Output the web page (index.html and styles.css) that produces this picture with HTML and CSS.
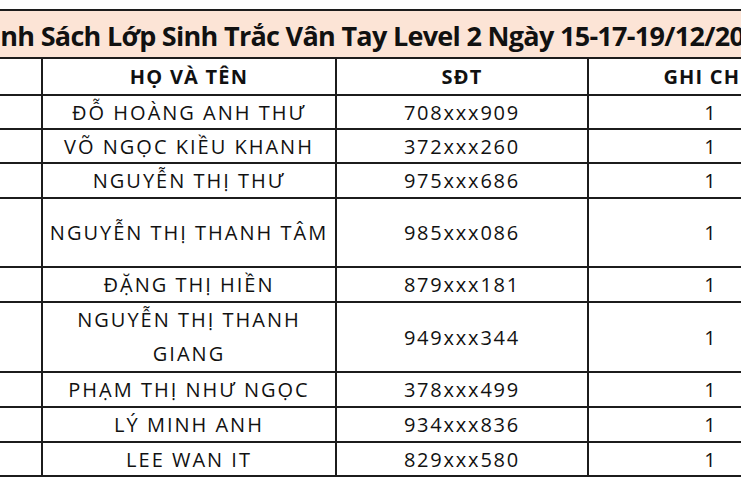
FILE: index.html
```html
<!DOCTYPE html>
<html lang="vi">
<head>
<meta charset="utf-8">
<title>Danh Sách Lớp Sinh Trắc Vân Tay Level 2</title>
<link rel="stylesheet" href="styles.css">
</head>
<body>
<div class="sheet">
  <table class="roster">
    <colgroup>
      <col class="c-stt">
      <col class="c-name">
      <col class="c-phone">
      <col class="c-note">
    </colgroup>
    <tr class="r-title">
      <td colspan="4" class="title">Danh Sách Lớp Sinh Trắc Vân Tay Level 2 Ngày 15-17-19/12/2023</td>
    </tr>
    <tr class="r-head">
      <th class="stt">STT</th>
      <th>HỌ VÀ TÊN</th>
      <th>SĐT</th>
      <th>GHI CHÚ</th>
    </tr>
    <tr class="r-34"><td class="stt">1</td><td class="name">ĐỖ HOÀNG ANH THƯ</td><td class="phone">708xxx909</td><td class="note">1</td></tr>
    <tr class="r-34"><td class="stt">2</td><td class="name">VÕ NGỌC KIỀU KHANH</td><td class="phone">372xxx260</td><td class="note">1</td></tr>
    <tr class="r-35"><td class="stt">3</td><td class="name">NGUYỄN THỊ THƯ</td><td class="phone">975xxx686</td><td class="note">1</td></tr>
    <tr class="r-69"><td class="stt">4</td><td class="name">NGUYỄN THỊ THANH TÂM</td><td class="phone">985xxx086</td><td class="note">1</td></tr>
    <tr class="r-35"><td class="stt">5</td><td class="name">ĐẶNG THỊ HIỀN</td><td class="phone">879xxx181</td><td class="note">1</td></tr>
    <tr class="r-68"><td class="stt">6</td><td class="name wrap">NGUYỄN THỊ THANH<br>GIANG</td><td class="phone">949xxx344</td><td class="note">1</td></tr>
    <tr class="r-35"><td class="stt">7</td><td class="name">PHẠM THỊ NHƯ NGỌC</td><td class="phone">378xxx499</td><td class="note">1</td></tr>
    <tr class="r-35"><td class="stt">8</td><td class="name">LÝ MINH ANH</td><td class="phone">934xxx836</td><td class="note">1</td></tr>
    <tr class="r-34"><td class="stt">9</td><td class="name">LEE WAN IT</td><td class="phone">829xxx580</td><td class="note">1</td></tr>
  </table>
</div>
</body>
</html>
```

FILE: styles.css
```css
html, body {
  margin: 0;
  padding: 0;
  background: #ffffff;
}

.sheet {
  width: 741px;
  height: 486px;
  overflow: hidden;
  padding-top: 9px;
  box-sizing: border-box;
}

.roster {
  margin-left: -94px;
  width: 925px;
  table-layout: fixed;
  border-collapse: collapse;
  font-family: "Open Sans", "Noto Sans", sans-serif;
  color: #111;
}

.c-stt { width: 135px; }
.c-name { width: 294px; }
.c-phone { width: 252px; }
.c-note { width: 244px; }

.roster td,
.roster th {
  border: 2px solid #1c1c1c;
  padding: 0;
  text-align: center;
  vertical-align: middle;
  white-space: nowrap;
  font-size: 20px;
  font-weight: 400;
  line-height: 27px;
}

.roster .stt {
  color: transparent;
  overflow: hidden;
}

.roster .name { letter-spacing: 2px; }
.roster .phone { letter-spacing: 1.8px; }

.roster th {
  font-weight: 700;
  letter-spacing: 1.2px;
}

.roster .title {
  background: #fce4d6;
  font-weight: 700;
  font-size: 27px;
  letter-spacing: -0.7px;
  color: #111;
  padding-top: 3px;
}

.roster .wrap {
  line-height: 34px;
}

.r-title { height: 48px; }
.r-head { height: 37px; }
.r-34 { height: 34px; }
.r-35 { height: 35px; }
.r-68 { height: 68px; }
.r-69 { height: 69px; }
```
